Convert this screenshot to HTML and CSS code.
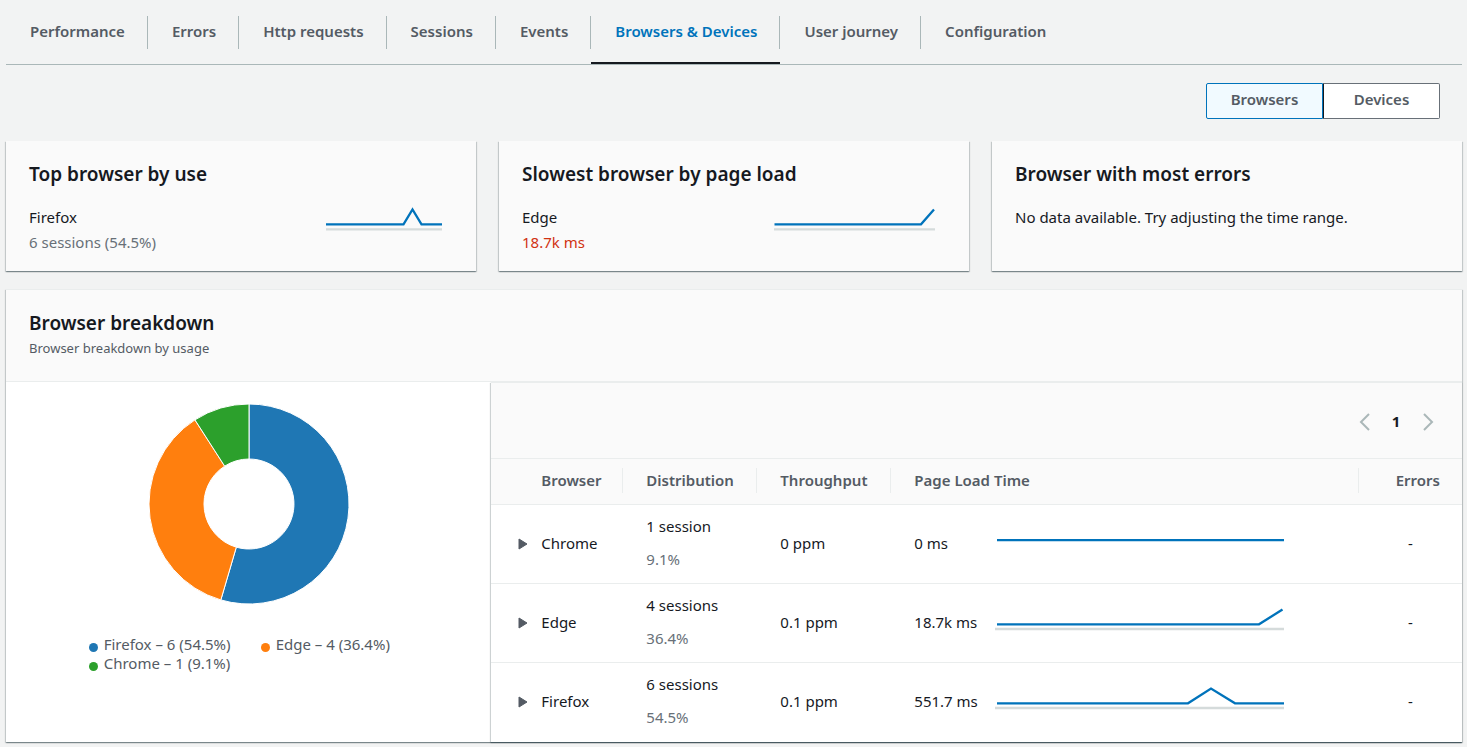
FILE: index.html
```html
<!DOCTYPE html>
<html lang="en">
<head>
<meta charset="utf-8">
<meta name="viewport" content="width=device-width, initial-scale=1">
<title>Browsers &amp; Devices</title>
<link rel="stylesheet" href="styles.css">
</head>
<body>
<nav class="tabs" aria-label="Monitoring views">
  <a class="tab" href="#performance">Performance</a>
  <a class="tab" href="#errors">Errors</a>
  <a class="tab" href="#http">Http requests</a>
  <a class="tab" href="#sessions">Sessions</a>
  <a class="tab" href="#events">Events</a>
  <a class="tab tab-active" href="#browsers" aria-current="page">Browsers &amp; Devices</a>
  <a class="tab" href="#journey">User journey</a>
  <a class="tab" href="#configuration">Configuration</a>
</nav>

<main class="content">
  <div class="switcher">
    <button class="segment segment-selected" type="button" aria-pressed="true">Browsers</button>
    <button class="segment" type="button" aria-pressed="false">Devices</button>
  </div>

  <div class="cards">
    <section class="card">
      <h2 class="title">Top browser by use</h2>
      <div class="card-body">
        <div class="metric">
          <p>Firefox</p>
          <p class="muted">6 sessions (54.5%)</p>
        </div>
        <svg class="spark" width="116" height="24" viewBox="0 0 116 24" aria-hidden="true">
          <path class="spark-base" d="M0 22.300H116"/>
          <path class="spark-line" d="M0 17.300H77.500L86.500 2.500L95.500 17.300H116"/>
        </svg>
      </div>
    </section>
    <section class="card">
      <h2 class="title">Slowest browser by page load</h2>
      <div class="card-body">
        <div class="metric">
          <p>Edge</p>
          <p class="alert">18.7k ms</p>
        </div>
        <svg class="spark" width="161" height="24" viewBox="0 0 161 24" aria-hidden="true">
          <path class="spark-base" d="M0 22.300H161"/>
          <path class="spark-line" d="M0.500 17.300H147L160 2.500"/>
        </svg>
      </div>
    </section>
    <section class="card">
      <h2 class="title">Browser with most errors</h2>
      <div class="card-body">
        <p>No data available. Try adjusting the time range.</p>
      </div>
    </section>
  </div>

  <section class="breakdown">
    <header class="breakdown-header">
      <h2 class="title">Browser breakdown</h2>
      <p class="subtitle">Browser breakdown by usage</p>
    </header>
    <div class="breakdown-body">
      <div class="chart">
        <svg class="donut" width="202" height="202" viewBox="-101 -101 202 202" role="img" aria-label="Browser share">
          <path fill="#1f77b4" d="M0 -100A100 100 0 1 1 -28.170 95.950L-12.680 43.180A45 45 0 1 0 0 -45Z"/>
          <path fill="#ff7f0e" d="M-28.170 95.950A100 100 0 0 1 -54.060 -84.130L-24.330 -37.860A45 45 0 0 0 -12.680 43.180Z"/>
          <path fill="#2ca02c" d="M-54.060 -84.130A100 100 0 0 1 0 -100L0 -45A45 45 0 0 0 -24.330 -37.860Z"/>
        </svg>
        <ul class="legend">
          <li class="legend-item"><span class="dot dot-firefox"></span>Firefox – 6 (54.5%)</li>
          <li class="legend-item"><span class="dot dot-edge"></span>Edge – 4 (36.4%)</li>
          <li class="legend-item"><span class="dot dot-chrome"></span>Chrome – 1 (9.1%)</li>
        </ul>
      </div>
      <div class="table-panel">
        <div class="pagination">
          <button class="page-arrow" type="button" aria-label="Previous page">
            <svg width="12" height="18" viewBox="0 0 12 18"><path d="M11 1L3 9L11 17"/></svg>
          </button>
          <button class="page-number" type="button" aria-current="page">1</button>
          <button class="page-arrow" type="button" aria-label="Next page">
            <svg width="12" height="18" viewBox="0 0 12 18"><path d="M2 1L10 9L2 17"/></svg>
          </button>
        </div>
        <table class="table">
          <colgroup>
            <col class="col-expand"><col class="col-browser"><col class="col-data"><col class="col-data"><col><col class="col-errors">
          </colgroup>
          <thead>
            <tr>
              <th class="cell-expand"></th>
              <th class="cell-browser"><div class="head">Browser</div></th>
              <th><div class="head">Distribution</div></th>
              <th><div class="head">Throughput</div></th>
              <th><div class="head">Page Load Time</div></th>
              <th><div class="head head-last">Errors</div></th>
            </tr>
          </thead>
          <tbody>
            <tr>
              <td class="cell-expand"><button class="expand" type="button" aria-label="Expand Chrome"><svg width="10" height="12" viewBox="0 0 10 12"><path d="M1 1L9 6L1 11Z"/></svg></button></td>
              <td class="cell-browser">Chrome</td>
              <td><div class="distribution"><span>1 session</span><span class="muted">9.1%</span></div></td>
              <td>0 ppm</td>
              <td><div class="load"><span class="load-value">0 ms</span>
                <svg class="spark" width="290" height="24" viewBox="0 0 290 24" aria-hidden="true"><path class="spark-line" d="M1 9.200H288"/></svg></div></td>
              <td class="cell-errors">-</td>
            </tr>
            <tr>
              <td class="cell-expand"><button class="expand" type="button" aria-label="Expand Edge"><svg width="10" height="12" viewBox="0 0 10 12"><path d="M1 1L9 6L1 11Z"/></svg></button></td>
              <td class="cell-browser">Edge</td>
              <td><div class="distribution"><span>4 sessions</span><span class="muted">36.4%</span></div></td>
              <td>0.1 ppm</td>
              <td><div class="load"><span class="load-value">18.7k ms</span>
                <svg class="spark" width="290" height="24" viewBox="0 0 290 24" aria-hidden="true"><path class="spark-base" d="M-1 19H288"/><path class="spark-line" d="M1 14.300H263L286.500 -0.500"/></svg></div></td>
              <td class="cell-errors">-</td>
            </tr>
            <tr>
              <td class="cell-expand"><button class="expand" type="button" aria-label="Expand Firefox"><svg width="10" height="12" viewBox="0 0 10 12"><path d="M1 1L9 6L1 11Z"/></svg></button></td>
              <td class="cell-browser">Firefox</td>
              <td><div class="distribution"><span>6 sessions</span><span class="muted">54.5%</span></div></td>
              <td>0.1 ppm</td>
              <td><div class="load"><span class="load-value">551.7 ms</span>
                <svg class="spark" width="290" height="24" viewBox="0 0 290 24" aria-hidden="true"><path class="spark-base" d="M-1 19H288"/><path class="spark-line" d="M1 14.300H192L215 -0.500L239 14.300H288"/></svg></div></td>
              <td class="cell-errors">-</td>
            </tr>
          </tbody>
        </table>
      </div>
    </div>
  </section>
</main>
</body>
</html>
```
FILE: styles.css
```css
* {
  box-sizing: border-box;
}

body {
  margin: 0;
  padding: 0 5px 5px 6px;
  background: #f2f3f3;
  color: #16191f;
  font-family: "Noto Sans", "Open Sans", sans-serif;
  font-size: 15px;
  line-height: 25px;
}

h2,
p,
ul {
  margin: 0;
  padding: 0;
}

button {
  font: inherit;
  color: inherit;
  cursor: pointer;
}

.tabs {
  display: flex;
  padding-top: 16px;
  border-bottom: 1px solid #aab7b8;
}

.tab {
  position: relative;
  height: 48px;
  padding: 3px 23px 0 24px;
  color: #545b64;
  font-weight: 600;
  text-decoration: none;
}

.tab + .tab::before {
  content: "";
  position: absolute;
  top: 0;
  left: -1px;
  width: 1px;
  height: 33px;
  background: #aab7b8;
}

.tab-active {
  color: #0073bb;
  border-bottom: 2px solid #16191f;
}

.switcher {
  display: flex;
  justify-content: flex-end;
  padding: 18px 22px 22px 0;
}

.segment {
  width: 117px;
  height: 36px;
  padding: 0 0 4px;
  border: 1px solid #687078;
  border-radius: 0 2px 2px 0;
  background: #ffffff;
  color: #545b64;
  font-weight: 600;
}

.segment-selected {
  border-color: #0073bb;
  border-radius: 2px 0 0 2px;
  background: #f1faff;
}

.segment + .segment {
  border-left-color: #16191f;
}

.cards {
  display: grid;
  grid-template-columns: repeat(3, 1fr);
  gap: 23px;
  margin-bottom: 18px;
}

.card,
.breakdown {
  box-shadow: 0 1px 1px 0 rgba(0, 28, 36, 0.3), 1px 1px 1px 0 rgba(0, 28, 36, 0.15), -1px 1px 1px 0 rgba(0, 28, 36, 0.15);
}

.card {
  padding: 19px 23px 16px;
  background: #fafafa;
}

.title {
  font-size: 19px;
  font-weight: 600;
  line-height: 28px;
}

.card-body {
  display: flex;
  justify-content: space-between;
  margin-top: 17px;
  padding-right: 11px;
}

.muted {
  color: #687078;
}

.alert {
  color: #d13212;
}

.spark {
  flex: none;
  overflow: visible;
}

.card .spark {
  margin-top: 2px;
}

.spark path {
  fill: none;
  stroke-width: 2.300;
}

.spark .spark-base {
  stroke: #d5dbdb;
}

.spark .spark-line {
  stroke: #0073bb;
}

.breakdown {
  border-top: 1px solid #eaeded;
  background: #ffffff;
}

.breakdown-header {
  padding: 19px 23px 22px;
  border-bottom: 1px solid #eaeded;
  background: #fafafa;
}

.subtitle {
  color: #545b64;
  font-size: 13px;
  line-height: 22px;
}

.breakdown-body {
  display: grid;
  grid-template-columns: 1fr 2fr;
}

.chart {
  display: flex;
  flex-direction: column;
  align-items: center;
  padding-top: 21px;
}

.donut path {
  stroke: #ffffff;
  stroke-width: 1;
}

.legend {
  display: grid;
  grid-template-columns: 172px 1fr;
  width: 320px;
  margin-top: 30px;
  color: #545b64;
  line-height: 19px;
  list-style: none;
}

.legend-item {
  display: flex;
  align-items: center;
  gap: 6px;
}

.dot {
  width: 9px;
  height: 9px;
  margin-top: 6px;
  border-radius: 50%;
}

.dot-firefox {
  background: #1f77b4;
}

.dot-edge {
  background: #ff7f0e;
}

.dot-chrome {
  background: #2ca02c;
}

.table-panel {
  border-top: 1px solid #eaeded;
  box-shadow: 0 1px 1px 0 rgba(0, 28, 36, 0.3), -1px 1px 1px 0 rgba(0, 28, 36, 0.15);
}

.pagination {
  display: flex;
  align-items: center;
  justify-content: flex-end;
  gap: 8px;
  height: 75px;
  padding: 2px 28px 0 0;
  background: #fafafa;
}

.page-arrow,
.page-number,
.expand {
  padding: 0;
  border: 0;
  background: none;
}

.page-arrow {
  display: flex;
}

.page-arrow path {
  fill: none;
  stroke: #aab7b8;
  stroke-width: 2;
}

.page-number {
  width: 36px;
  font-weight: 700;
}

.table {
  width: 100%;
  table-layout: fixed;
  border-collapse: collapse;
}

.col-expand {
  width: 50px;
}

.col-browser {
  width: 82px;
}

.col-data {
  width: 134px;
}

.col-errors {
  width: 103px;
}

.table th {
  height: 46px;
  padding: 0 0 2px;
  border-top: 1px solid #eaeded;
  background: #fafafa;
  color: #545b64;
  font-weight: 600;
  text-align: left;
}

.head {
  padding-left: 23px;
  border-right: 1px solid #eaeded;
}

.head-last {
  padding-right: 22px;
  border-right: 0;
  text-align: right;
}

.table .cell-browser,
.cell-browser .head {
  padding-left: 0;
}

.table td {
  height: 79px;
  padding: 0 0 2px 23px;
  border-top: 1px solid #eaeded;
}

.table .cell-expand {
  padding: 0 0 0 27px;
}

.table .cell-errors {
  padding: 0 0 2px;
  text-align: center;
}

.expand {
  display: flex;
}

.expand path {
  fill: #545b64;
  stroke: #545b64;
  stroke-width: 1;
  stroke-linejoin: round;
}

.distribution {
  display: grid;
  gap: 8px;
}

.load {
  display: flex;
  align-items: center;
}

.load-value {
  width: 82px;
}
```
